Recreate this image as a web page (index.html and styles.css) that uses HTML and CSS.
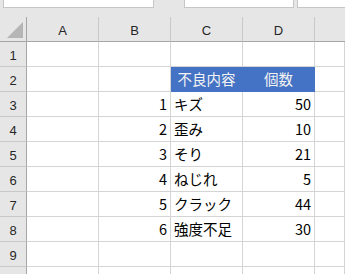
FILE: index.html
```html
<!DOCTYPE html>
<html>
<head>
  <meta charset="UTF-8">
  <title>不良集計</title>
  <link rel="stylesheet" href="styles.css">
</head>
<body>
  <div class="toolbar">
    <div class="field name-box"></div>
    <div class="field formula"></div>
    <div class="field formula-rest"></div>
  </div>

  <div class="sheet">
    <!-- 列見出し -->
    <div class="hd corner"><span class="tri"></span></div>
    <div class="hd col">A</div>
    <div class="hd col">B</div>
    <div class="hd col">C</div>
    <div class="hd col">D</div>
    <div class="hd col last"></div>

    <div class="hd row">1</div>
    <div class="cell"></div><div class="cell"></div><div class="cell"></div><div class="cell"></div><div class="cell"></div>

    <div class="hd row">2</div>
    <div class="cell"></div><div class="cell"></div>
    <div class="cell title">不良内容</div><div class="cell title">個数</div>
    <div class="cell"></div>

    <div class="hd row">3</div>
    <div class="cell"></div><div class="cell num">1</div><div class="cell">キズ</div><div class="cell num">50</div><div class="cell"></div>

    <div class="hd row">4</div>
    <div class="cell"></div><div class="cell num">2</div><div class="cell">歪み</div><div class="cell num">10</div><div class="cell"></div>

    <div class="hd row">5</div>
    <div class="cell"></div><div class="cell num">3</div><div class="cell">そり</div><div class="cell num">21</div><div class="cell"></div>

    <div class="hd row">6</div>
    <div class="cell"></div><div class="cell num">4</div><div class="cell">ねじれ</div><div class="cell num">5</div><div class="cell"></div>

    <div class="hd row">7</div>
    <div class="cell"></div><div class="cell num">5</div><div class="cell">クラック</div><div class="cell num">44</div><div class="cell"></div>

    <div class="hd row">8</div>
    <div class="cell"></div><div class="cell num">6</div><div class="cell">強度不足</div><div class="cell num">30</div><div class="cell"></div>

    <div class="hd row">9</div>
    <div class="cell"></div><div class="cell"></div><div class="cell"></div><div class="cell"></div><div class="cell"></div>

    <!-- 10行目は下端で切れるので番号なし -->
    <div class="hd row"></div>
    <div class="cell"></div><div class="cell"></div><div class="cell"></div><div class="cell"></div><div class="cell"></div>
  </div>
</body>
</html>
```

FILE: styles.css
```css
/* シート全体 */
body {
  margin: 0;
  background-color: #e6e6e6;
  font-family: "Noto Sans CJK JP", sans-serif;
  overflow: hidden;
}

.toolbar {
  display: flex;
  height: 8px;
  margin-bottom: 9px;
}

.field {
  background-color: #fff;
  border: 1px solid #c6c6c6;
  border-top: none;
  box-sizing: border-box;
}

.name-box {
  margin-left: 3px;
  width: 151px;
}

.formula {
  margin-left: 30px;
  width: 110px;
}

.formula-rest {
  margin-left: 3px;
  flex: 1;
  border-right: none;
}

.sheet {
  display: grid;
  grid-template-columns: 27px 72px 72px 72px 72px 1fr;
  grid-auto-rows: 25px;
  background-color: #fff;
}

/* 見出し */
.hd {
  background-color: #e6e6e6;
  color: #262626;
  font-family: "Liberation Sans", Arial, sans-serif;
  font-size: 13px;
  display: flex;
  align-items: center;
  justify-content: center;
  box-sizing: border-box;
}

.col {
  border-right: 1px solid #c8c8c8;
  border-bottom: 1px solid #a6a6a6;
  padding-top: 2px;
}

.col.last {
  border-right: none;
}

.corner {
  border-right: 1px solid #a6a6a6;
  border-bottom: 1px solid #a6a6a6;
  justify-content: flex-end;
  align-items: flex-end;
  padding: 0 3px 3px 0;
}

.tri {
  width: 16px;
  height: 16px;
  background-color: #b5b5b5;
  clip-path: polygon(100% 0, 100% 100%, 0 100%);
}

.row {
  border-right: 1px solid #a6a6a6;
  border-bottom: 1px solid #c8c8c8;
  padding-top: 2px;
}

/* セル */
.cell {
  box-sizing: border-box;
  border-right: 1px solid #d4d4d4;
  border-bottom: 1px solid #d4d4d4;
  font-size: 14.5px;
  color: #000;
  display: flex;
  align-items: flex-end;
  padding: 0 3px 2px 3px;
  line-height: 20px;
  white-space: nowrap;
}

.num {
  justify-content: flex-end;
}

.title {
  background-color: #4472c4;
  border-color: #4472c4;
  color: #f2f2f2;
  justify-content: center;
}
```
